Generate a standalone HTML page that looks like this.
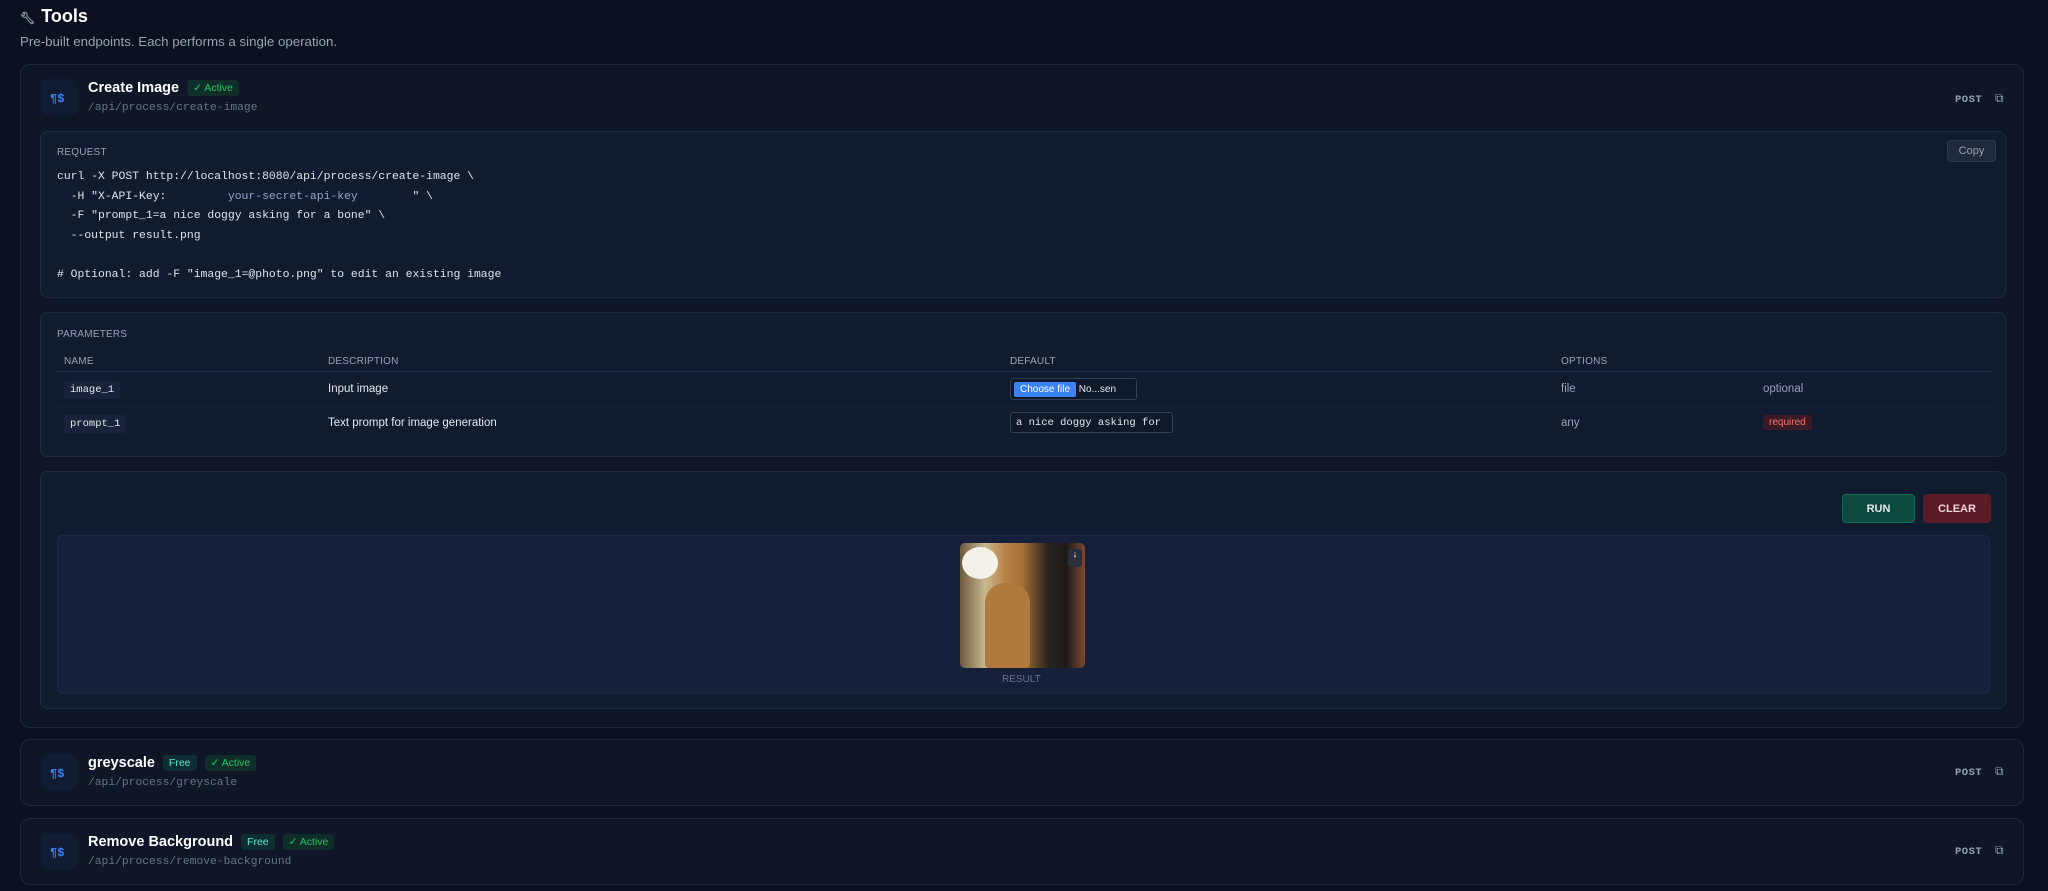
<!DOCTYPE html>
<html><head><meta charset="utf-8"><style>
*{box-sizing:border-box;margin:0;padding:0}
body{width:2048px;height:891px;overflow:hidden;background:#0b1120;font-family:"Liberation Sans",sans-serif;color:#e2e8f0;position:relative}
.a{position:absolute}
.mono{font-family:"Liberation Mono",monospace}
.card{position:absolute;left:20px;width:2004px;background:#0e1628;border:1px solid #1e293b;border-radius:10px}
.box{position:absolute;left:19px;width:1966px;background:#111b2f;border:1px solid #1f2a3e;border-radius:8px}
.ic{position:absolute;width:36px;height:36px;background:#111c33;border-radius:6px}
.t{font-size:14.5px;font-weight:bold;color:#fff}
.path{font-size:11.3px;color:#64748b}
.badge{display:inline-block;font-size:10.5px;padding:2px 6px;border-radius:3px;background:#0f2e2a;color:#22c55e;margin-left:8px;vertical-align:1px;font-weight:normal}
.free{color:#5eead4;background:#0f2e33}
.lbl{font-size:10px;color:#94a3b8;letter-spacing:.2px}
.post{font-size:10.5px;color:#94a3b8;font-weight:bold;letter-spacing:.5px}
.btn{display:flex;align-items:center;justify-content:center;font-size:11px;font-weight:bold;border-radius:4px}
</style></head><body>
<div class="a" style="left:20px;top:6px;font-size:18px;font-weight:bold;color:#fff"><span style="font-size:12px;color:#94a3b8;margin-right:6px">&#x1F527;&#xFE0E;</span>Tools</div>
<div class="a" style="left:20px;top:34px;font-size:13.3px;color:#94a3b8">Pre-built endpoints. Each performs a single operation.</div>

<div class="card" style="top:64px;height:664px">
  <div class="ic" style="left:20px;top:14px"><svg width="36" height="36"><text x="9" y="23" font-family="Liberation Mono" font-size="12" fill="#3b82f6" font-weight="bold">¶$</text></svg></div>
  <div class="a t" style="left:67px;top:15px">Create Image<span class="badge">✓ Active</span></div>
  <div class="a path mono" style="left:67px;top:37px">/api/process/create-image</div>
  <div class="a post mono" style="left:1934px;top:27px">POST <span style="font-weight:normal;font-size:12px;margin-left:6px">⧉</span></div>

  <div class="box" style="top:66px;height:167px">
    <div class="a lbl" style="left:16px;top:15px">REQUEST</div>
    <div class="a" style="left:1906px;top:8px;width:49px;height:22px;border-radius:4px;background:#1e293b;border:1px solid #2b3850;font-size:11px;color:#94a3b8;text-align:center;line-height:20px">Copy</div>
    <pre class="a mono" style="left:16px;top:36px;font-size:11.4px;line-height:19.6px;color:#dbe4f0">curl -X POST http://localhost:8080/api/process/create-image \
  -H "X-API-Key:         <span style="color:#93a7c8">your-secret-api-key</span>        " \
  -F "prompt_1=a nice doggy asking for a bone" \
  --output result.png

# Optional: add -F "image_1=@photo.png" to edit an existing image</pre>
  </div>

  <div class="box" style="top:247px;height:145px">
    <div class="a lbl" style="left:16px;top:16px">PARAMETERS</div>
    <div class="a lbl" style="left:23px;top:43px">NAME</div>
    <div class="a lbl" style="left:287px;top:43px">DESCRIPTION</div>
    <div class="a lbl" style="left:969px;top:43px">DEFAULT</div>
    <div class="a lbl" style="left:1520px;top:43px">OPTIONS</div>
    <div class="a" style="left:16px;top:58px;width:1934px;height:1px;background:#243047"></div>
    <div class="a" style="left:16px;top:93px;width:1934px;height:1px;background:#172237"></div>
    <div class="a mono" style="left:23px;top:68px;font-size:10.5px;background:#18233a;padding:3px 6px;border-radius:3px">image_1</div>
    <div class="a mono" style="left:23px;top:102px;font-size:10.5px;background:#18233a;padding:3px 6px;border-radius:3px">prompt_1</div>
    <div class="a" style="left:287px;top:70px;font-size:11.5px">Input image</div>
    <div class="a" style="left:287px;top:104px;font-size:11.5px">Text prompt for image generation</div>
    <div class="a" style="left:969px;top:65px;width:127px;height:22px;border:1px solid #334155;border-radius:3px;background:#0f172a;font-size:10px;padding:3px 3px;white-space:nowrap"><span style="background:#3b82f6;color:#fff;padding:2px 6px;border-radius:2px;display:inline-block">Choose file</span> No...sen</div>
    <div class="a mono" style="left:969px;top:99px;width:163px;height:21px;border:1px solid #334155;border-radius:3px;background:#0f172a;font-size:10.5px;padding:4px 5px;white-space:nowrap;overflow:hidden">a nice doggy asking for</div>
    <div class="a" style="left:1520px;top:70px;font-size:11.5px;color:#94a3b8">file</div>
    <div class="a" style="left:1520px;top:104px;font-size:11.5px;color:#94a3b8">any</div>
    <div class="a" style="left:1722px;top:70px;font-size:11.5px;color:#94a3b8">optional</div>
    <div class="a" style="left:1722px;top:102px;font-size:10px;color:#f87171;background:#3a1a24;padding:2px 6px;border-radius:3px">required</div>
  </div>

  <div class="box" style="top:406px;height:238px">
    <div class="a btn" style="left:1801px;top:22px;width:73px;height:29px;background:#0b4a3d;border:1px solid #0f6b57;color:#e2e8f0">RUN</div>
    <div class="a btn" style="left:1882px;top:22px;width:68px;height:29px;background:#5a1a26;color:#f1d5d9">CLEAR</div>
    <div class="a" style="left:16px;top:63px;width:1933px;height:159px;background:#16203a;border:1px solid #1d2942;border-radius:6px">
      <div class="a" style="left:902px;top:7px;width:125px;height:125px;border-radius:5px;overflow:hidden;background:linear-gradient(90deg,#6b5a3e 0%,#c9b98f 20%,#b8864a 35%,#a66e33 50%,#2a2520 70%,#1c1a18 85%,#7a4a35 100%)">
        <div class="a" style="left:25px;top:40px;width:45px;height:85px;border-radius:20px 20px 4px 4px;background:#b07a3c"></div>
        <div class="a" style="left:2px;top:4px;width:36px;height:32px;border-radius:50%;background:#f4f1e8"></div>
        <div class="a" style="left:108px;top:6px;width:14px;height:18px;background:#2a2f3a;border-radius:3px;color:#fff;font-size:9px;text-align:center">↓</div>
      </div>
      <div class="a" style="left:944px;top:138px;font-size:10px;color:#64748b">RESULT</div>
    </div>
  </div>
</div>

<div class="card" style="top:739px;height:67px">
  <div class="ic" style="left:20px;top:14px"><svg width="36" height="36"><text x="9" y="23" font-family="Liberation Mono" font-size="12" fill="#3b82f6" font-weight="bold">¶$</text></svg></div>
  <div class="a t" style="left:67px;top:15px">greyscale<span class="badge free">Free</span><span class="badge">✓ Active</span></div>
  <div class="a path mono" style="left:67px;top:37px">/api/process/greyscale</div>
  <div class="a post mono" style="left:1934px;top:25px">POST <span style="font-weight:normal;font-size:12px;margin-left:6px">⧉</span></div>
</div>

<div class="card" style="top:818px;height:67px">
  <div class="ic" style="left:20px;top:14px"><svg width="36" height="36"><text x="9" y="23" font-family="Liberation Mono" font-size="12" fill="#3b82f6" font-weight="bold">¶$</text></svg></div>
  <div class="a t" style="left:67px;top:15px">Remove Background<span class="badge free">Free</span><span class="badge">✓ Active</span></div>
  <div class="a path mono" style="left:67px;top:37px">/api/process/remove-background</div>
  <div class="a post mono" style="left:1934px;top:25px">POST <span style="font-weight:normal;font-size:12px;margin-left:6px">⧉</span></div>
</div>
</body></html>
